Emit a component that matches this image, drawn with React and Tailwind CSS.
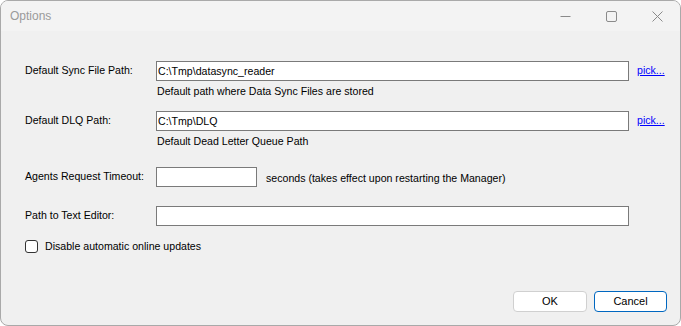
export default function App() {
  return (
    <div className="w-[681px] h-[326px] bg-white">
      <div className="w-full h-full flex flex-col border border-[#a9a9a9] rounded-[8px] overflow-hidden bg-[#f0f0f0] font-['Liberation_Sans',Arial,sans-serif] text-[10.6px] text-black">
        <TitleBar />
        <div className="flex-1 flex flex-col pl-[24px]">
          <div className="mt-[30px] flex items-center h-[20px]">
            <span className="w-[131px]">Default Sync File Path:</span>
            <input
              defaultValue="C:\Tmp\datasync_reader"
              className="w-[473px] h-[20px] border border-[#7a7a7a] bg-white px-[1px] outline-none"
            />
            <a href="#" className="ml-[8px] text-[#0000ff] underline">
              pick...
            </a>
          </div>
          <p className="mt-[4px] pl-[132px] leading-[13px]">
            Default path where Data Sync Files are stored
          </p>

          <div className="mt-[13px] flex items-center h-[20px]">
            <span className="w-[131px]">Default DLQ Path:</span>
            <input
              defaultValue="C:\Tmp\DLQ"
              className="w-[473px] h-[20px] border border-[#7a7a7a] bg-white px-[1px] outline-none"
            />
            <a href="#" className="ml-[8px] text-[#0000ff] underline">
              pick...
            </a>
          </div>
          <p className="mt-[4px] pl-[132px] leading-[13px]">
            Default Dead Letter Queue Path
          </p>

          <div className="mt-[19px] flex items-center h-[20px]">
            <span className="w-[131px]">Agents Request Timeout:</span>
            <input className="w-[101px] h-[20px] border border-[#7a7a7a] bg-white outline-none" />
            <span className="ml-[9px] mt-[3px]">
              seconds (takes effect upon restarting the Manager)
            </span>
          </div>

          <div className="mt-[19px] flex items-center h-[20px]">
            <span className="w-[131px]">Path to Text Editor:</span>
            <input className="w-[473px] h-[20px] border border-[#7a7a7a] bg-white outline-none" />
          </div>

          <label className="mt-[13px] flex items-center gap-[7px]">
            <span className="w-[13px] h-[13px] border border-[#333333] rounded-[3px] bg-white" />
            <span>Disable automatic online updates</span>
          </label>

          <div className="flex-1" />
          <div className="flex justify-end gap-[7px] pr-[13px] pb-[13px]">
            <button className="w-[74px] h-[21px] bg-white border border-[#d0d0d0] rounded-[4px] text-[11px]">
              OK
            </button>
            <button className="w-[73px] h-[21px] bg-white border border-[#0067c0] rounded-[4px] text-[11px]">
              Cancel
            </button>
          </div>
        </div>
      </div>
    </div>
  );
}

function TitleBar() {
  return (
    <div className="h-[30px] flex items-center bg-[#f3f3f3]">
      <span className="pl-[9px] text-[12px] text-[#9a9a9a]">Options</span>
      <div className="ml-auto flex h-full">
        <div className="w-[46px] h-full flex items-center justify-center">
          <svg width="11" height="11" viewBox="0 0 11 11">
            <path d="M0.5 5.5H10.5" stroke="#8a8a8a" strokeWidth="1" />
          </svg>
        </div>
        <div className="w-[46px] h-full flex items-center justify-center">
          <svg width="11" height="11" viewBox="0 0 11 11">
            <rect x="0.5" y="0.5" width="10" height="10" rx="1.5" fill="none" stroke="#8a8a8a" strokeWidth="1" />
          </svg>
        </div>
        <div className="w-[46px] h-full flex items-center justify-center">
          <svg width="11" height="11" viewBox="0 0 11 11">
            <path d="M0.5 0.5L10.5 10.5M10.5 0.5L0.5 10.5" stroke="#8a8a8a" strokeWidth="1" />
          </svg>
        </div>
      </div>
    </div>
  );
}
